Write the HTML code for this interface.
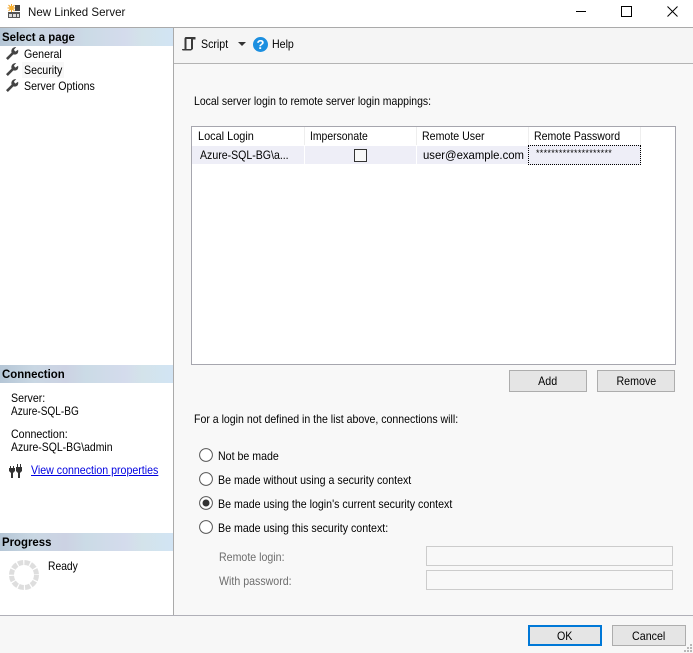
<!DOCTYPE html>
<html><head><meta charset="utf-8"><style>
html,body{margin:0;padding:0;width:693px;height:653px;overflow:hidden;background:#f7f7f7}
body{position:relative;font-family:"Liberation Sans",sans-serif;font-size:12px;color:#000}
.a,.t{position:absolute}
.t{white-space:nowrap;line-height:14px;transform:scaleX(.885);transform-origin:0 0}
.hd{position:absolute;left:0;width:173px;height:18px;background:linear-gradient(90deg,#b5c6d6 0,#c9d7e3 20%,#ccd2e3 38%,#cbdbe6 50%,#d4dbec 72%,#d3e3ea 82%,#d2e4f4 100%);font-weight:bold;line-height:18px}
.hd span{display:inline-block;margin-left:2px;transform:scaleX(.95);transform-origin:0 0;white-space:nowrap}
.btn{position:absolute;box-sizing:border-box;background:#e5e5e5;border:1px solid #adadad;text-align:center;line-height:20px}
.btn span{display:inline-block;transform:scaleX(.89)}
.inp{position:absolute;left:426px;width:247px;height:20px;box-sizing:border-box;border:1px solid #ccc;background:#f8f8f8}
.th{position:absolute;top:127px;height:18px;width:111px;background:#fff;border-right:1px solid #eee}
.lab{color:#6d6d6d}
</style></head><body>
<div class="a" style="left:0;top:0;width:693px;height:27px;background:#fff"></div>
<div class="a" style="left:0;top:27px;width:693px;height:1px;background:#aaa"></div>
<svg class="a" style="left:7px;top:3px" width="16" height="16" viewBox="0 0 16 16"><path d="M4.500 1v8M.5 5h8M1.500 2l6 6M7.500 2l-6 6" stroke="#f0a020"/><circle cx="4.500" cy="5" r="2.200" fill="#f8b030"/><rect x="8" y="2" width="5" height="6" fill="#444"/><rect x="1" y="9" width="12" height="6" fill="#555"/><rect x="2" y="11" width="3" height="3" fill="#ddd"/><rect x="6" y="11" width="3" height="3" fill="#ddd"/><rect x="10" y="11" width="2" height="3" fill="#ddd"/></svg>
<div class="t" style="left:28px;top:5px;color:#111;transform:scaleX(.96)">New Linked Server</div>
<div class="a" style="left:576px;top:11px;width:10px;height:1px;background:#000"></div>
<div class="a" style="left:621px;top:6px;width:9px;height:9px;border:1px solid #000"></div>
<svg class="a" style="left:667px;top:6px" width="11" height="11"><path d="M.5.500l10 10M10.500.500l-10 10" stroke="#000"/></svg>

<div class="a" style="left:0;top:28px;width:173px;height:587px;background:#fff"></div>
<div class="a" style="left:173px;top:28px;width:1px;height:587px;background:#aaa"></div>
<div class="a" style="left:174px;top:28px;width:519px;height:35px;background:#f5f5f5"></div>
<div class="a" style="left:174px;top:63px;width:519px;height:1px;background:#b4b4b4"></div>
<div class="a" style="left:174px;top:64px;width:519px;height:551px;background:#f8f8f8"></div>
<div class="a" style="left:0;top:615px;width:693px;height:1px;background:#b0b0b8"></div>

<div class="hd" style="top:28px"><span>Select a page</span></div>
<svg class="a" style="left:6px;top:47px" width="13" height="13" viewBox="0 0 14 14"><path d="M2 14L0 12 6 6C5 3 7 0 11 0L8.500 3 10 5 13 3C14 7 11 9 8 8Z" fill="#444"/></svg>
<svg class="a" style="left:6px;top:63px" width="13" height="13" viewBox="0 0 14 14"><path d="M2 14L0 12 6 6C5 3 7 0 11 0L8.500 3 10 5 13 3C14 7 11 9 8 8Z" fill="#444"/></svg>
<svg class="a" style="left:6px;top:79px" width="13" height="13" viewBox="0 0 14 14"><path d="M2 14L0 12 6 6C5 3 7 0 11 0L8.500 3 10 5 13 3C14 7 11 9 8 8Z" fill="#444"/></svg>
<div class="t" style="left:24px;top:47px">General</div>
<div class="a" style="left:22px;top:62px;width:42px;height:16px;background:#f8f8f8"></div>
<div class="t" style="left:24px;top:63px">Security</div>
<div class="t" style="left:24px;top:79px">Server Options</div>

<div class="hd" style="top:365px"><span>Connection</span></div>
<div class="t" style="left:11px;top:391px">Server:</div>
<div class="t" style="left:11px;top:404px;transform:scaleX(.84)">Azure-SQL-BG</div>
<div class="t" style="left:11px;top:427px">Connection:</div>
<div class="t" style="left:11px;top:440px;transform:scaleX(.87)">Azure-SQL-BG\admin</div>
<svg class="a" style="left:9px;top:464px" width="14" height="15" viewBox="0 0 14 15"><path d="M0 4h6v3L4 9v5H2V9L0 7zM7 3h6v4l-2 2v5H9V9L7 7zM8 0h1v3H8zM11 0h1v3h-1zM1 2h1v2H1zM4 2h1v2H4z" fill="#333"/></svg>
<div class="t" style="left:31px;top:463px;color:#0000e0;text-decoration:underline">View connection properties</div>

<div class="hd" style="top:533px"><span>Progress</span></div>
<svg class="a" style="left:9px;top:560px" width="30" height="30" viewBox="0 0 30 30"><circle cx="15" cy="15" r="12.500" fill="none" stroke="#dedede" stroke-width="5" stroke-dasharray="5.300 1.250"/></svg>
<div class="t" style="left:48px;top:559px;transform:scaleX(.86)">Ready</div>

<svg class="a" style="left:182px;top:36px" width="14" height="15" viewBox="0 0 14 15"><path d="M4 1h9.500v2.500H11V13l-2 1.500H1c-.6 0-1-.5-1-1.500h2.500V3C2.500 2 3 1 4 1zM4.500 3v10H9V3z" fill="#3a3a3a"/></svg>
<div class="t" style="left:201px;top:37px">Script</div>
<svg class="a" style="left:238px;top:42px" width="8" height="5"><path d="M0 0h8L4 4z" fill="#333"/></svg>
<svg class="a" style="left:253px;top:37px" width="15" height="15" viewBox="0 0 15 15"><circle cx="7.500" cy="7.500" r="7.500" fill="#1c8fe0"/><text x="7.500" y="12" font-family="Liberation Sans" font-size="13" font-weight="bold" text-anchor="middle" fill="#fff">?</text></svg>
<div class="t" style="left:272px;top:37px">Help</div>

<div class="t" style="left:194px;top:94px;transform:scaleX(.871)">Local server login to remote server login mappings:</div>

<div class="a" style="left:191px;top:126px;width:483px;height:237px;background:#fff;border:1px solid #a6a6ae"></div>
<div class="th" style="left:193px"></div><div class="th" style="left:305px"></div><div class="th" style="left:417px"></div><div class="th" style="left:529px"></div>
<div class="t" style="left:198px;top:129px;transform:scaleX(.91)">Local Login</div>
<div class="t" style="left:310px;top:129px;transform:scaleX(.866)">Impersonate</div>
<div class="t" style="left:422px;top:129px">Remote User</div>
<div class="t" style="left:534px;top:129px;transform:scaleX(.878)">Remote Password</div>
<div class="a" style="left:192px;top:146px;width:449px;height:18px;background:#eeeef7"></div>
<div class="a" style="left:304px;top:146px;width:1px;height:18px;background:#fff"></div>
<div class="a" style="left:416px;top:146px;width:1px;height:18px;background:#fff"></div>
<div class="t" style="left:200px;top:148px;transform:scaleX(.88)">Azure-SQL-BG\a...</div>
<div class="a" style="left:354px;top:149px;width:11px;height:11px;border:1px solid #333;background:#f8f8f8"></div>
<div class="t" style="left:423px;top:148px;transform:scaleX(.945)">user@example.com</div>
<div class="a" style="left:528px;top:145px;width:111px;height:18px;border:1px dotted #000;background:#eeeef7"></div>
<div class="t" style="left:536px;top:146px;font-size:9px;letter-spacing:.3px;transform:none">********************</div>

<div class="btn" style="left:509px;top:370px;width:78px;height:22px"><span>Add</span></div>
<div class="btn" style="left:597px;top:370px;width:78px;height:22px"><span>Remove</span></div>

<div class="t" style="left:194px;top:412px;transform:scaleX(.88)">For a login not defined in the list above, connections will:</div>

<svg class="a" style="left:199px;top:448px" width="14" height="14"><circle cx="7" cy="7" r="6.400" fill="#fff" stroke="#555"/></svg>
<svg class="a" style="left:199px;top:472px" width="14" height="14"><circle cx="7" cy="7" r="6.400" fill="#fff" stroke="#555"/></svg>
<svg class="a" style="left:199px;top:496px" width="14" height="14"><circle cx="7" cy="7" r="6.400" fill="#fff" stroke="#555"/><circle cx="7" cy="7" r="3.500" fill="#333"/></svg>
<svg class="a" style="left:199px;top:520px" width="14" height="14"><circle cx="7" cy="7" r="6.400" fill="#fff" stroke="#555"/></svg>
<div class="t" style="left:218px;top:449px">Not be made</div>
<div class="t" style="left:218px;top:473px;transform:scaleX(.886)">Be made without using a security context</div>
<div class="t" style="left:218px;top:497px;transform:scaleX(.886)">Be made using the login's current security context</div>
<div class="t" style="left:218px;top:521px;transform:scaleX(.886)">Be made using this security context:</div>
<div class="t lab" style="left:219px;top:550px">Remote login:</div>
<div class="t lab" style="left:219px;top:574px">With password:</div>
<div class="inp" style="top:546px"></div>
<div class="inp" style="top:570px"></div>

<div class="btn" style="left:528px;top:625px;width:74px;height:21px;border:2px solid #0078d7;line-height:18px"><span>OK</span></div>
<div class="btn" style="left:612px;top:625px;width:74px;height:21px;line-height:20px"><span>Cancel</span></div>
<svg class="a" style="left:682px;top:642px" width="11" height="11" fill="#b8b8b8"><rect x="8" y="2" width="2" height="2"/><rect x="5" y="5" width="2" height="2"/><rect x="8" y="5" width="2" height="2"/><rect x="2" y="8" width="2" height="2"/><rect x="5" y="8" width="2" height="2"/><rect x="8" y="8" width="2" height="2"/></svg>
</body></html>
